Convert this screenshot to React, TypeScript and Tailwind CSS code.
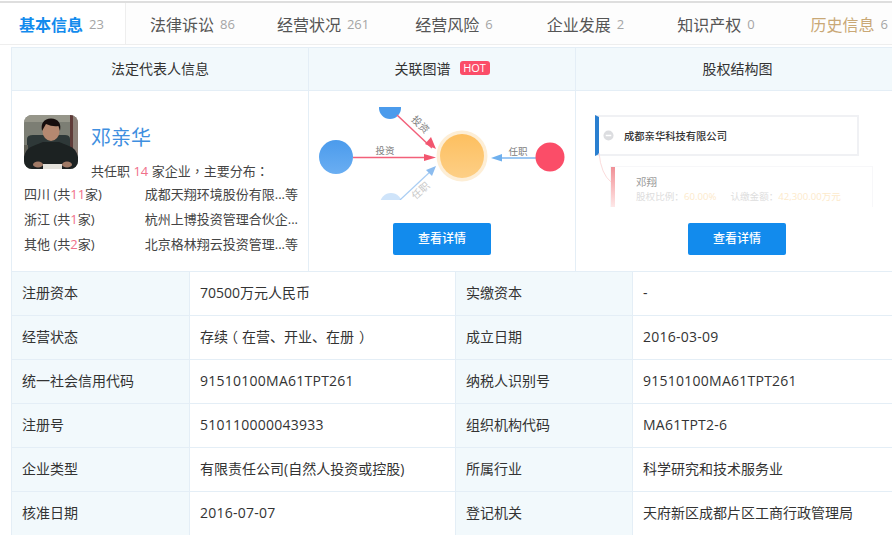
import React from "react";

const tabs = [
  { t: "基本信息", n: "23", cls: "w-[126px] pl-[19px] border-r border-[#eeeeee] bg-white", text: "text-[#128bed] font-bold" },
  { t: "法律诉讼", n: "86", cls: "pl-[24px]", text: "text-[#555555]" },
  { t: "经营状况", n: "261", cls: "pl-[42px]", text: "text-[#555555]" },
  { t: "经营风险", n: "6", cls: "pl-[46px]", text: "text-[#555555]" },
  { t: "企业发展", n: "2", cls: "pl-[54px]", text: "text-[#555555]" },
  { t: "知识产权", n: "0", cls: "pl-[53px]", text: "text-[#555555]" },
  { t: "历史信息", n: "6", cls: "pl-[56px]", text: "text-[#c9a876]" },
];

const Tc = ({ children }: { children: React.ReactNode }) => (
  <span className="font-['Noto_Sans_CJK_TC',sans-serif]">{children}</span>
);

const Num = ({ children }: { children: React.ReactNode }) => (
  <span className="tracking-[0.25px]">{children}</span>
);

const rows: React.ReactNode[][] = [
  ["注册资本", "70500万元人民币", "实缴资本", "-"],
  [
    "经营状态",
    <>
      存续<span className="inline-block translate-x-[-4px]">（</span>在营、开业、在册<span className="inline-block translate-x-[5px]">）</span>
    </>,
    "成立日期",
    <Num>2016-03-09</Num>,
  ],
  ["统一社会信用代码", <Num>91510100MA61TPT261</Num>, "纳税人识别号", <Num>91510100MA61TPT261</Num>],
  ["注册号", <Num>510110000043933</Num>, "组织机构代码", <Num>MA61TPT2-6</Num>],
  ["企业类型", "有限责任公司(自然人投资或控股)", "所属行业", "科学研究和技术服务业"],
  ["核准日期", <Num>2016-07-07</Num>, "登记机关", "天府新区成都片区工商行政管理局"],
];

const regions = [
  ["四川", "11", "成都天翔环境股份有限...等"],
  ["浙江", "1", "杭州上博投资管理合伙企..."],
  ["其他", "2", "北京格林翔云投资管理...等"],
];

function Photo() {
  return (
    <svg viewBox="0 0 54 54" className="w-[54px] h-[54px] rounded-lg shrink-0">
      <defs>
        <filter id="soft"><feGaussianBlur stdDeviation="0.6" /></filter>
      </defs>
      <rect width="54" height="54" fill="#7c7e74" />
      <g filter="url(#soft)">
        <rect width="54" height="7" fill="#96968a" />
        <rect x="46" width="3" height="36" fill="#5f3a38" />
        <rect x="49" width="5" height="40" fill="#8b7f76" />
        <path d="M3 46V24q0-4 6-4h32q5 0 5 4v22z" fill="#2e3937" />
        <rect x="0" y="30" width="4" height="24" fill="#5f5e55" />
        <path d="M0 54V42q2-9 9-11l10-4h16l10 4q7 2 9 11v12z" fill="#1d2024" />
        <ellipse cx="27" cy="16" rx="8.500" ry="10" fill="#b58870" />
        <path d="M18 16q-2-12 9-12.500 11 .5 9 12.500l-1.500-5q-6 1-12.500-2z" fill="#17110f" />
        <rect x="19" y="49" width="19" height="5" fill="#e4e2dc" />
        <ellipse cx="14" cy="49.500" rx="5" ry="3" fill="#a07a66" />
        <ellipse cx="43" cy="49.500" rx="5" ry="3" fill="#a07a66" />
      </g>
    </svg>
  );
}

function Graph() {
  return (
    <svg viewBox="309 91 266 110" className="w-[266px] h-[110px] shrink-0">
      <defs>
        <linearGradient id="bl" x1="0" y1="0" x2="0" y2="1">
          <stop offset="0" stopColor="#4b9bec" />
          <stop offset="1" stopColor="#6aaef2" />
        </linearGradient>
        <linearGradient id="or" x1="0" y1="0" x2="0" y2="1">
          <stop offset="0" stopColor="#fdbf5f" />
          <stop offset="1" stopColor="#fdcf86" />
        </linearGradient>
        <clipPath id="gc"><rect x="309" y="107" width="266" height="93" /></clipPath>
      </defs>
      <g clipPath="url(#gc)">
        <circle cx="390" cy="108" r="11" fill="#4b9bec" />
        <circle cx="391" cy="204" r="11" fill="#cfe4fa" />
        <path d="M397 115 L432 148" stroke="#f2607a" strokeWidth="1.5" fill="none" />
        <path d="M436 149 L425 144 L431 137 Z" fill="#f2566f" />
        <path d="M400 200 L432 170" stroke="#a9cdf3" strokeWidth="1.2" fill="none" />
        <path d="M436 166 L432 176 L426 170 Z" fill="#8cbcef" />
      </g>
      <text x="420" y="128" transform="rotate(45 420 125)" fontSize="10" textAnchor="middle" fill="#808080">投资</text>
      <text x="421" y="194" transform="rotate(-42 421 191)" fontSize="10" textAnchor="middle" fill="#c8c8c8">任职</text>
      <circle cx="336" cy="157" r="17" fill="url(#bl)" />
      <path d="M353 157.5 L426 157.5" stroke="#f2607a" strokeWidth="1.5" />
      <path d="M436 157.5 L424 154 L424 161 Z" fill="#f2566f" />
      <text x="385" y="154" fontSize="9.5" textAnchor="middle" fill="#808080">投资</text>
      <circle cx="462" cy="156" r="25.5" fill="#fdeed6" />
      <circle cx="462" cy="156" r="22" fill="url(#or)" />
      <path d="M536 158 L500 158" stroke="#7db6ef" strokeWidth="1.5" />
      <path d="M491 158 L502 154 L502 161.5 Z" fill="#6fb0ee" />
      <text x="518" y="155" fontSize="9.5" textAnchor="middle" fill="#808080">任职</text>
      <circle cx="550" cy="157" r="14.5" fill="#fb4d68" />
    </svg>
  );
}

function DetailButton({ className }: { className: string }) {
  return (
    <button className={`w-[98px] h-[32px] bg-[#128bed] rounded-[2px] text-white text-[12px] font-medium shrink-0 ${className}`}>
      查看详情
    </button>
  );
}

function Structure() {
  return (
    <div className="relative w-full h-[132px] shrink-0 pt-[24px]">
      <div className="ml-[19px] w-[264px] h-[41px] border-2 border-l-[4px] border-[#f0f1f4] border-l-[#2a7fd0] flex items-center">
        <svg viewBox="0 0 12 12" className="w-[11px] h-[11px] ml-[4px]">
          <circle cx="6" cy="6" r="5.5" fill="#dcdde0" />
          <rect x="3" y="5.200" width="6" height="1.600" fill="#ffffff" />
        </svg>
        <span className="ml-[10px] mt-[1px] text-[10.3px] font-medium text-[#333333] leading-none">成都亲华科技有限公司</span>
      </div>
      <div className="ml-[34px] mt-[10px] w-[263px] h-[41px] border border-[#f7f7f9] border-b-0 relative pl-[25px] pt-[8px]">
        <div className="absolute left-0 top-0 bottom-0 w-[4px] bg-gradient-to-b from-[#f08f96] to-[#fde8e8]" />
        <div className="text-[10.5px] leading-[14px] text-[#9a9a9a]">邓翔</div>
        <div className="text-[9.6px] leading-[16px] whitespace-nowrap text-[#dddddd]">
          股权比例：<span className="text-[#fdeacb]">60.00%</span>
          <span className="ml-[14px]">认缴金额：</span>
          <span className="text-[#fdeacb]">42,300.00万元</span>
        </div>
      </div>
      <svg viewBox="0 0 14 34" className="absolute left-[22px] top-[61px] w-[14px] h-[34px]">
        <path d="M1 1 Q3 22 13 30" stroke="#fbdcdc" strokeWidth="1" fill="none" />
      </svg>
    </div>
  );
}

export default function App() {
  return (
    <div className="w-[892px] h-[535px] overflow-hidden bg-white font-['Open_Sans','Noto_Sans_CJK_SC',sans-serif] text-[14px] text-[#333333]">
      <div className="mt-[1px] h-[44px] border-t-2 border-b border-t-[#dedede] border-b-[#eeeeee] bg-[#fdfdfd] flex whitespace-nowrap">
        {tabs.map((x) => (
          <div key={x.t} className={`h-full flex items-center shrink-0 pt-[2px] ${x.cls}`}>
            <span className={`text-[16px] ${x.text}`}>{x.t}</span>
            <span className="ml-[6px] text-[13px] text-[#a5a5a5]">{x.n}</span>
          </div>
        ))}
      </div>

      <div className="ml-[11px] mt-[2px] border-l border-[#e4eef6]">
        <div className="grid grid-cols-[297px_267px_1fr]">
          <div className="h-[44px] bg-[#f2f9fc] border-y border-r border-[#e4eef6] flex items-center justify-center pb-[2px]">法定代表人信息</div>
          <div className="h-[44px] bg-[#f2f9fc] border-y border-r border-[#e4eef6] flex items-center justify-center pb-[2px]">
            关联图谱
            <span className="ml-[9px] w-[30px] h-[14px] bg-[#fb4d68] rounded-[3px] text-white text-[11px] leading-[14px] text-center">HOT</span>
          </div>
          <div className="h-[44px] bg-[#f2f9fc] border-y border-[#e4eef6] flex items-center justify-center pl-[7px] pb-[2px]">股权结构图</div>

          <div className="h-[180px] border-r border-[#e4eef6] pl-[12px] pt-[24px] text-[#444444]">
            <div className="flex h-[54px]">
              <Photo />
              <div className="ml-[13px] mt-[7px] text-[20px] leading-[32px] text-[#3f8fe0]">邓亲华</div>
            </div>
            <div className="ml-[67px] leading-[22px] mt-[-9px] text-[13px] relative">
              共任职 <span className="text-[#f0708a]">14</span> 家企业<Tc>，</Tc>主要分布<Tc>：</Tc>
            </div>
            {regions.map((r) => (
              <div key={r[0]} className="flex justify-between h-[25px] items-center pr-[10px] text-[13px] whitespace-nowrap">
                <span>
                  {r[0]} (共<span className="text-[#f0708a]">{r[1]}</span>家)
                </span>
                <span>{r[2]}</span>
              </div>
            ))}
          </div>

          <div className="h-[180px] border-r border-[#e4eef6] flex flex-col items-center">
            <Graph />
            <DetailButton className="mt-[22px]" />
          </div>

          <div className="h-[180px] flex flex-col">
            <Structure />
            <DetailButton className="ml-[112px]" />
          </div>
        </div>

        <div className="grid grid-cols-[178px_266px_177px_1fr] border-t border-[#e4eef6]">
          {rows.map((r, ri) =>
            r.map((c, i) => (
              <div
                key={ri + "-" + i}
                className={`h-[44px] border-b border-[#e4eef6] flex items-center px-[10px] pb-[2px] whitespace-nowrap ${
                  i % 2 === 0 ? "bg-[#f2f9fc] border-r" : i === 1 ? "border-r" : ""
                }`}
              >
                <span>{c}</span>
              </div>
            ))
          )}
        </div>
      </div>
    </div>
  );
}
